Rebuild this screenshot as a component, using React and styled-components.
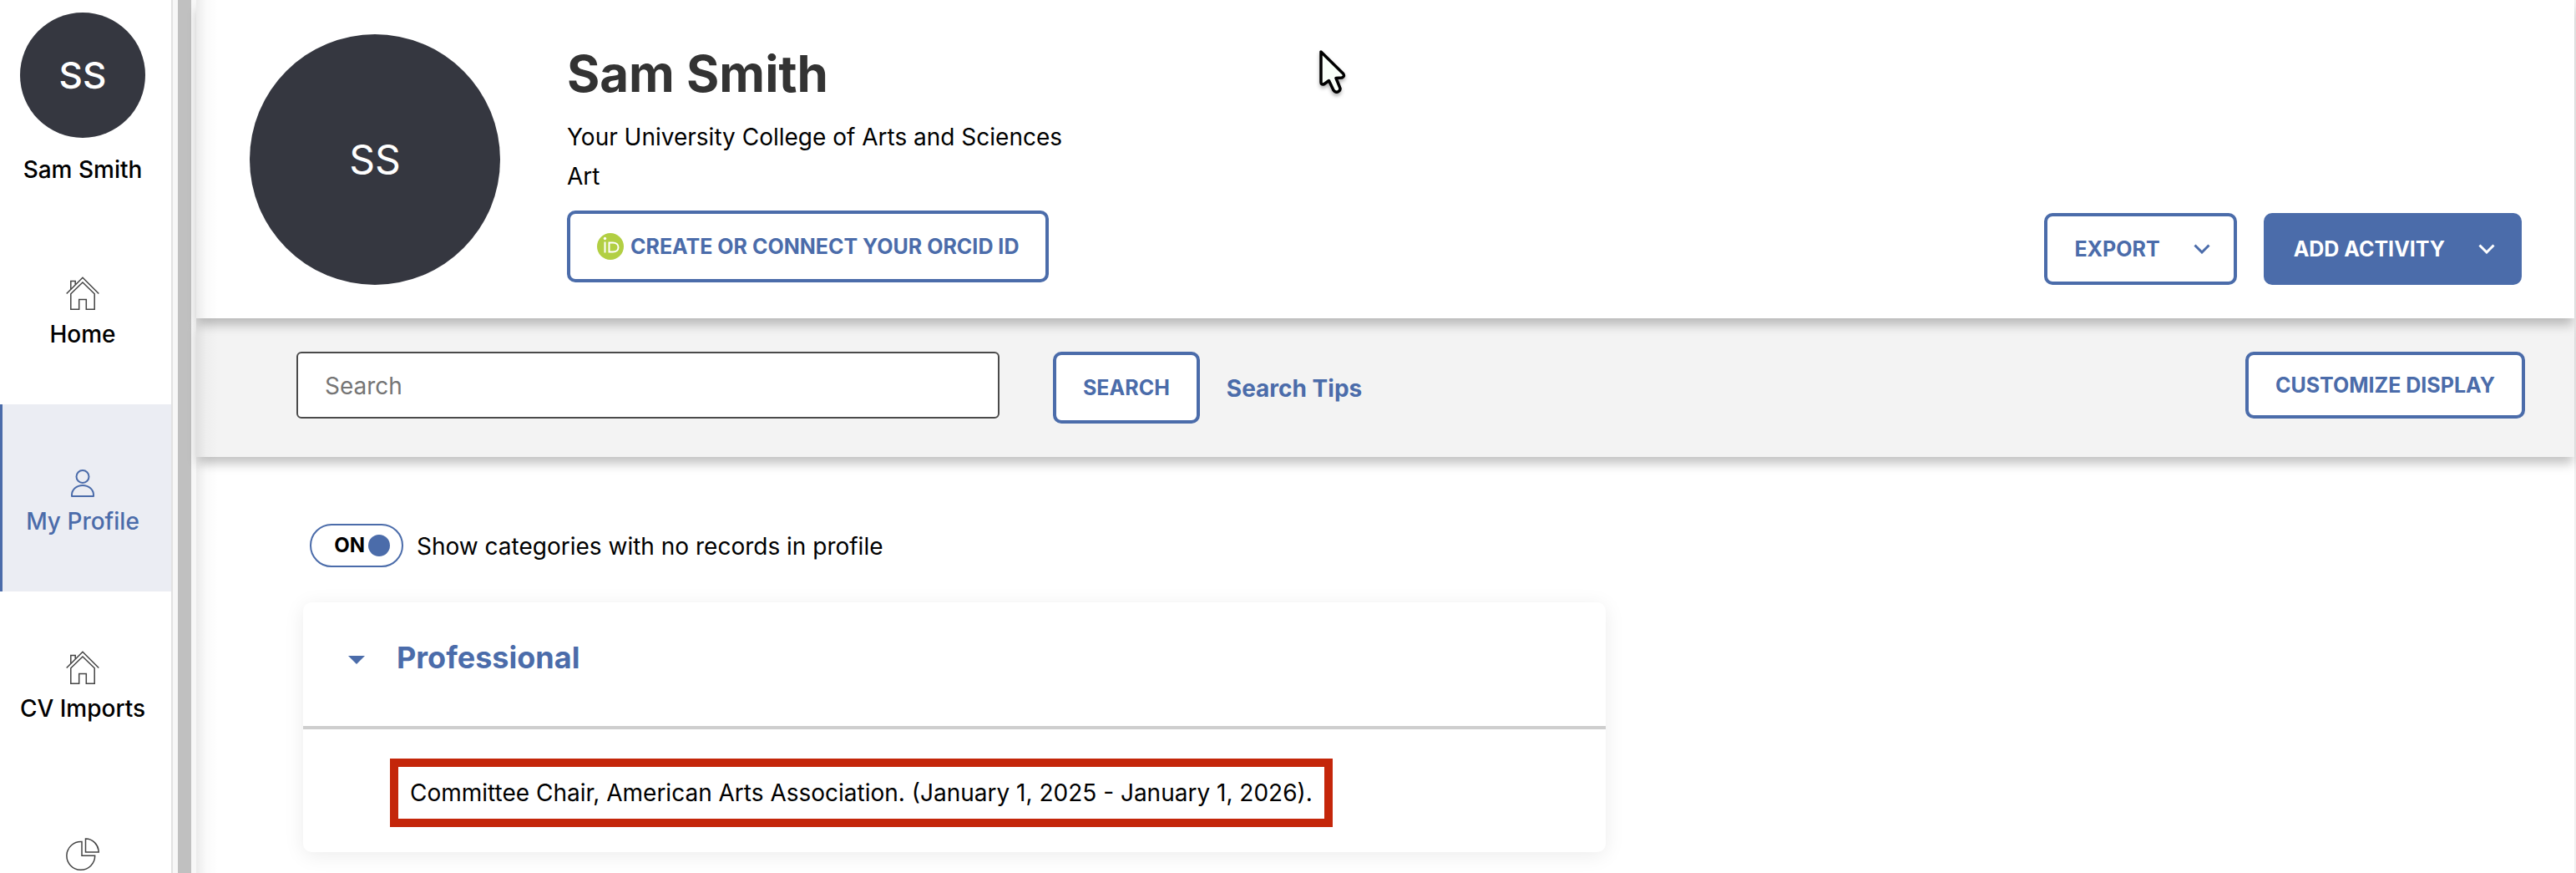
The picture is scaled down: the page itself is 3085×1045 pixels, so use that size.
import React, { useState } from 'react';
import styled, { createGlobalStyle, css } from 'styled-components'

const blue = '#4b6caa'

const GlobalStyle = createGlobalStyle`
*{box-sizing:border-box}
body{
margin:0;
background:#fff;
color:#000;
font-family:Inter,"Liberation Sans",sans-serif;
font-size:28px;
line-height:34px
}
button,input{font-family:inherit}
`

const Shell = styled.div`
display:flex;
height:100vh;
overflow:hidden
`

const Sidebar = styled.aside`
flex:0 0 207px;
border-right:2px solid #e2e2e2;
background:#fff
`

const User = styled.div`
display:flex;
flex-direction:column;
align-items:center;
gap:21px;
padding:15px 7px 40px 0;
font-weight:500
`

const Avatar = styled.div`
display:flex;
flex:none;
align-items:center;
justify-content:center;
width:${(props)=>props.$size}px;
height:${(props)=>props.$size}px;
border-radius:50%;
background:#353740;
color:#fff;
font-size:${(props)=>props.$font}px;
font-weight:${(props)=>props.$weight}
`

const NavItem = styled.a`
display:flex;
flex-direction:column;
align-items:center;
gap:12px;
height:224px;
padding:71px 7px 0 0;
color:${(props)=>props.$active?blue:'#000'};
background:${(props)=>props.$active?'#ebedf3':'transparent'};
box-shadow:${(props)=>props.$active?`inset 3px 0 0 ${blue}`:'none'};
font-weight:500;
text-decoration:none
`

const Splitter = styled.div`
flex:0 0 28px;
border:solid #f7f7f7;
border-width:0 6px;
background:#c0c0c0
`

const Main = styled.main`
flex:1;
min-width:0;
border-right:2px solid #f0f0f0
`

/* soft shade falling from the splitter onto every band */
const edge = css`
background-image:linear-gradient(to right,rgba(0,0,0,.08),rgba(0,0,0,.02) 12px,transparent 26px)
`

const bandShadow = css`
box-shadow:0 10px 12px -2px rgba(0,0,0,.24)
`

const Header = styled.header`
position:relative;
z-index:2;
display:flex;
gap:80px;
padding:41px 63px 40px 64px;
background-color:#fff;
${edge};
${bandShadow}
`

const Info = styled.div`
flex:1
`

const Name = styled.h1`
margin:0 0 6px;
color:#333;
font-size:60px;
line-height:94px;
font-weight:700
`

const Unit = styled.p`
margin:0;
line-height:47px
`

const Button = styled.button`
display:inline-flex;
align-items:center;
justify-content:center;
gap:8px;
height:${(props)=>props.$short?80:86}px;
padding:0 32px;
border:4px solid ${blue};
border-radius:10px;
background:${(props)=>props.$filled?blue:'#fff'};
color:${(props)=>props.$filled?'#fff':blue};
font-size:25px;
font-weight:700;
text-transform:uppercase;
white-space:nowrap;
cursor:pointer
`

const OrcidButton = styled(Button)`
margin-top:17px
`

const MenuButton = styled(Button)`
gap:40px;
padding-right:28px
`

const Actions = styled.div`
display:flex;
align-self:flex-end;
gap:32px
`

const Toolbar = styled.form`
position:relative;
z-index:1;
display:flex;
align-items:flex-start;
justify-content:space-between;
padding:40px 59px 40px 120px;
background-color:#f3f3f3;
${edge};
${bandShadow}
`

const SearchGroup = styled.div`
display:flex;
flex:1;
align-items:flex-start
`

const SearchInput = styled.input`
width:100%;
max-width:842px;
height:80px;
margin-right:64px;
padding:2px 32px 0;
border:2px solid #4a4a4a;
border-radius:6px;
background:#fff;
font-size:28px;
&::placeholder{color:#757575;opacity:1}
`

const SearchActions = styled.div`
display:flex;
align-items:center;
gap:32px
`

const TipsLink = styled.a`
padding-top:2px;
color:${blue};
font-weight:700;
text-decoration:none;
white-space:nowrap
`

const Content = styled.section`
height:100%;
padding:80px 64px 0 128px;
${edge}
`

const ToggleLabel = styled.label`
display:inline-flex;
align-items:center;
gap:16px;
margin-left:8px;
cursor:pointer
`

const ToggleInput = styled.input`
position:absolute;
opacity:0
`

const ToggleText = styled.span`
padding-top:2px
`

const Track = styled.span`
display:flex;
flex-direction:${(props)=>props.$on?'row':'row-reverse'};
align-items:center;
justify-content:flex-end;
gap:4px;
width:112px;
height:52px;
padding:0 14px;
border:2px solid ${blue};
border-radius:26px;
background:#fff;
font-size:24px;
font-weight:700
`

const Knob = styled.span`
width:26px;
height:26px;
border-radius:50%;
background:${blue}
`

const Card = styled.article`
max-width:1560px;
margin-top:42px;
border-radius:10px;
background:#fff;
box-shadow:0 4px 24px rgba(0,0,0,.08)
`

const CardTitle = styled.h2`
margin:0;
border-bottom:4px solid #cecece
`

const CardToggle = styled.button`
display:flex;
align-items:center;
gap:38px;
width:100%;
padding:42px 54px 58px;
border:0;
background:none;
color:${blue};
font-size:36px;
line-height:48px;
font-weight:700;
text-align:left;
cursor:pointer
`

const CardBody = styled.div`
padding:35px 32px 30px 104px
`

const Record = styled.div`
width:fit-content;
padding:14px;
border:10px solid #c4260a
`

const Pointer = styled.svg`
position:fixed;
top:56px;
left:1574px;
z-index:3;
pointer-events:none;
filter:drop-shadow(0 3px 2px rgba(0,0,0,.3))
`

const HomeIcon = () => (
  <svg width="40" height="40" viewBox="0 0 40 40" fill="none" stroke="#444" strokeWidth="1.5" aria-hidden="true">
    <path d="M.7 20.5 20 1.2l19.3 19.3"/>
    <path d="M5.8 15.2V5.5h5.4v4"/>
    <path d="M5.8 20.8 20 7l14.2 13.8v18.4H24.3V27.5h-8.6v11.7H5.8z"/>
  </svg>
)

const UserIcon = () => (
  <svg width="40" height="40" viewBox="0 0 40 40" fill="none" stroke={blue} strokeWidth="2" aria-hidden="true">
    <circle cx="20" cy="15.5" r="7.5"/>
    <path d="M7 39v-1.500C7 31 12.800 26 20 26s13 5 13 11.500V39z" strokeLinejoin="round"/>
  </svg>
)

const PieIcon = () => (
  <svg width="40" height="40" viewBox="0 0 40 40" fill="none" stroke="#444" strokeWidth="1.5" aria-hidden="true">
    <path d="M19 4.500v16.800h15.700A16.900 16.900 0 1 1 19 4.500z"/>
    <path d="M23.500 1v16h15.700C39 8 32 1 23.500 1z"/>
  </svg>
)

const Chevron = () => (
  <svg width="20" height="12" viewBox="0 0 20 12" fill="none" stroke="currentColor" strokeWidth="3" aria-hidden="true">
    <path d="m1.500 1.500 8.500 8.500 8.500-8.500"/>
  </svg>
)

const Caret = () => (
  <svg width="20" height="20" viewBox="0 0 20 20" fill="currentColor" aria-hidden="true">
    <path d="M0 8h20L10 18z"/>
  </svg>
)

const OrcidIcon = () => (
  <svg width="32" height="32" viewBox="0 0 32 32" fill="none" stroke="#fff" strokeWidth="2" aria-hidden="true">
    <circle cx="16" cy="16" r="16" fill="#b2cf43" stroke="none"/>
    <circle cx="9.5" cy="6.5" r="1.7" fill="#fff" stroke="none"/>
    <path d="M9.500 10.500v13"/>
    <path d="M14.500 11.500h4.500c4 0 6.500 2.300 6.500 5.500s-2.500 5.500-6.500 5.500h-4.500z"/>
  </svg>
)

const navItems = [
  {label:'Home',icon:HomeIcon},
  {label:'My Profile',icon:UserIcon,active:true},
  {label:'CV Imports',icon:HomeIcon},
]

const App = () => {
  const [showEmpty,setShowEmpty] = useState(true)
  const [open,setOpen] = useState(true)

  return (
    <Shell>
      <GlobalStyle/>
      <Sidebar>
        <User>
          <Avatar $size={150} $font={44} $weight={500}>SS</Avatar>
          <span>Sam Smith</span>
        </User>
        <nav>
          {navItems.map(({label,icon:Icon,active})=>(
            <NavItem key={label} href="#" $active={active} aria-current={active?'page':undefined}>
              <Icon/>
              <span>{label}</span>
            </NavItem>
          ))}
          <NavItem href="#" aria-label="Reports"><PieIcon/></NavItem>
        </nav>
      </Sidebar>
      <Splitter/>
      <Main>
        <Header>
          <Avatar $size={300} $font={48} $weight={400}>SS</Avatar>
          <Info>
            <Name>Sam Smith</Name>
            <Unit>Your University College of Arts and Sciences</Unit>
            <Unit>Art</Unit>
            <OrcidButton type="button"><OrcidIcon/>Create or connect your ORCID iD</OrcidButton>
          </Info>
          <Actions>
            <MenuButton type="button">Export<Chevron/></MenuButton>
            <MenuButton type="button" $filled>Add activity<Chevron/></MenuButton>
          </Actions>
        </Header>
        <Toolbar onSubmit={(e)=>e.preventDefault()}>
          <SearchGroup>
            <SearchInput type="text" placeholder="Search" aria-label="Search"/>
            <SearchActions>
              <Button type="submit">Search</Button>
              <TipsLink href="#">Search Tips</TipsLink>
            </SearchActions>
          </SearchGroup>
          <Button type="button" $short>Customize display</Button>
        </Toolbar>
        <Content>
          <ToggleLabel>
            <ToggleInput type="checkbox" checked={showEmpty} onChange={(e)=>setShowEmpty(e.target.checked)}/>
            <Track $on={showEmpty}>{showEmpty?'ON':'OFF'}<Knob/></Track>
            <ToggleText>Show categories with no records in profile</ToggleText>
          </ToggleLabel>
          <Card>
            <CardTitle>
              <CardToggle type="button" aria-expanded={open} onClick={()=>setOpen(!open)}>
                <Caret/>Professional
              </CardToggle>
            </CardTitle>
            {open && (
              <CardBody>
                <Record>Committee Chair, American Arts Association. (January 1, 2025 - January 1, 2026).</Record>
              </CardBody>
            )}
          </Card>
        </Content>
      </Main>
      <Pointer width="42" height="60" viewBox="0 0 42 60" aria-hidden="true">
        <path d="M8 6v36.500q0 3.500 4 2l5.500-4 5.500 11.500q2.500 3.500 6 1.500 3-2 1.500-5L26 37.500l7-.5q4-1.500 1.500-5z" fill="#f8fff8" stroke="#000" strokeWidth="3.5" strokeLinejoin="round"/>
      </Pointer>
    </Shell>
  );
}

export default App;
